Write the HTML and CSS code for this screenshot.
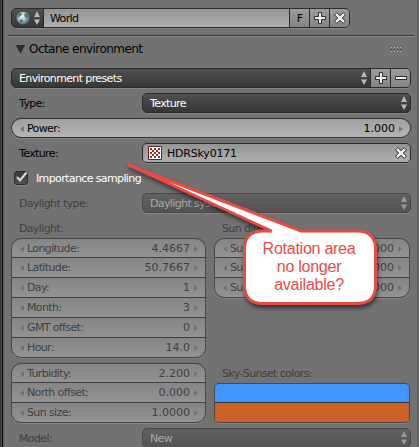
FILE: index.html
```html
<!DOCTYPE html>
<html lang="en">
<head>
<meta charset="utf-8">
<title>Octane environment</title>
<link rel="stylesheet" href="styles.css">
</head>
<body>
<svg width="0" height="0" class="defs">
  <symbol id="ud" viewBox="0 0 6 14"><path d="M3 0 6 6H0zM3 14 0 8.500H6z" fill="currentColor"/></symbol>
  <symbol id="plus" viewBox="0 0 12 12"><path d="M4.500.5h3v4h4v3h-4v4h-3v-4h-4v-3h4z" fill="#eee" stroke="#2c2c2c"/></symbol>
  <symbol id="minus" viewBox="0 0 12 12"><path d="M.5 4.500h11v3H.5z" fill="#eee" stroke="#2c2c2c"/></symbol>
  <symbol id="cross" viewBox="0 0 12 12"><path d="M2.800.6 6 3.700 9.200.6l2.200 2.200L8.300 6l3.100 3.200-2.200 2.200L6 8.300l-3.200 3.100L.6 9.200 3.700 6 .6 2.800z" fill="#eee" stroke="#2c2c2c"/></symbol>
</svg>
<main class="panel">
  <div class="row world">
    <div class="group">
      <div class="cell dark pick">
        <svg class="globe" viewBox="0 0 14 14"><defs><radialGradient id="g" cx=".42" cy=".35" r=".7"><stop offset="0" stop-color="#f0f7fc"/><stop offset=".55" stop-color="#8fb4d8"/><stop offset="1" stop-color="#3c628f"/></radialGradient></defs><circle cx="7" cy="7" r="6.500" fill="url(#g)" stroke="#3d5878" stroke-width=".7"/><path d="M1.500 4.500 4 2l2 .6L5.300 4.500 3.500 5.500 1.900 7zM8.500 3l2-.8 1.700 2.300-.5 3-1.700-.6L8.500 5zM4 8.500l3 .5-.3 2L5.200 12.500 4 10.800zM9.500 9l1.800-.5-1 2.200z" fill="#5d7a35"/></svg>
        <svg class="ud"><use href="#ud"/></svg>
      </div>
      <div class="cell light grow name">World</div>
      <div class="cell btn f">F</div>
      <div class="cell btn"><svg class="ic"><use href="#plus"/></svg></div>
      <div class="cell btn"><svg class="ic"><use href="#cross"/></svg></div>
    </div>
  </div>
  <header class="head"><svg class="tri" viewBox="0 0 9 9"><path d="M0 0h9L4.500 9z" fill="#2b2b2b"/></svg><h1>Octane environment</h1><span class="grip"></span></header>
  <div class="body">
    <div class="row">
      <div class="group grow">
        <div class="cell dark grow menu"><span>Environment presets</span><svg class="ud"><use href="#ud"/></svg></div>
        <div class="cell btn"><svg class="ic"><use href="#plus"/></svg></div>
        <div class="cell btn"><svg class="ic"><use href="#minus"/></svg></div>
      </div>
    </div>
    <div class="row"><span class="label">Type:</span><div class="group grow"><div class="cell dark grow menu"><span>Texture</span><svg class="ud"><use href="#ud"/></svg></div></div></div>
    <div class="stack power"><div class="num"><span>Power:</span><b>1.000</b></div></div>
    <div class="row"><span class="label">Texture:</span><div class="group grow tex"><div class="cell light grow">
      <svg class="checker" viewBox="0 0 14 14"><path d="M.5.5h13v13H.5z" fill="#fff" stroke="#5c241c"/><path d="M2 2h2v2H2zM6 2h2v2H6zM10 2h2v2h-2zM4 4h2v2H4zM8 4h2v2H8zM2 6h2v2H2zM6 6h2v2H6zM10 6h2v2h-2zM4 8h2v2H4zM8 8h2v2H8zM2 10h2v2H2zM6 10h2v2H6zM10 10h2v2h-2z" fill="#8e3527"/></svg>
      <span class="grow file">HDRSky0171</span><svg class="ic"><use href="#cross"/></svg></div></div></div>
    <div class="row check"><span class="box"><svg viewBox="0 0 14 14"><path d="M3 6 6 9.500 12.500 1.500" fill="none" stroke="#ddd" stroke-width="2"/></svg></span><span>Importance sampling</span></div>
    <div class="row off"><span class="label">Daylight type:</span><div class="group grow"><div class="cell dark grow menu"><span>Daylight system</span><svg class="ud"><use href="#ud"/></svg></div></div></div>
    <div class="cols off">
      <section>
        <div class="cap">Daylight:</div>
        <div class="stack">
          <div class="num"><span>Longitude:</span><b>4.4667</b></div>
          <div class="num"><span>Latitude:</span><b>50.7667</b></div>
          <div class="num"><span>Day:</span><b>1</b></div>
          <div class="num"><span>Month:</span><b>3</b></div>
          <div class="num"><span>GMT offset:</span><b>0</b></div>
          <div class="num"><span>Hour:</span><b>14.0</b></div>
        </div>
      </section>
      <section>
        <div class="cap">Sun direction:</div>
        <div class="stack">
          <div class="num"><span>Sun X:</span><b>0.000</b></div>
          <div class="num"><span>Sun Y:</span><b>1.000</b></div>
          <div class="num"><span>Sun Z:</span><b>0.000</b></div>
        </div>
      </section>
    </div>
    <div class="cols off second">
      <section>
        <div class="stack">
          <div class="num"><span>Turbidity:</span><b>2.200</b></div>
          <div class="num"><span>North offset:</span><b>0.000</b></div>
          <div class="num"><span>Sun size:</span><b>1.0000</b></div>
        </div>
      </section>
      <section>
        <div class="cap">Sky-Sunset colors:</div>
        <div class="swatches"><div class="sky"></div><div class="sunset"></div></div>
      </section>
    </div>
    <div class="row off"><span class="label">Model:</span><div class="group grow"><div class="cell dark grow menu"><span>New</span><svg class="ud"><use href="#ud"/></svg></div></div></div>
  </div>
  <aside class="callout">
    <svg viewBox="0 0 264 152"><path d="M8.500 4.500 182 71H238Q256.500 71 256.500 89V125.500Q256.500 143.500 238 143.500H144Q125.500 143.500 125.500 125.500V89Q125.500 71 144 71H152.500Z" fill="#fff" stroke="#e84b44" stroke-width="3"/></svg>
    <p>Rotation area<br>no longer<br>available?</p>
  </aside>
</main>
</body>
</html>
```
FILE: styles.css
```css
* { box-sizing: border-box; }
html, body { margin: 0; height: 447px; overflow: hidden; }
body { font: 11px/18px "DejaVu Sans", sans-serif; letter-spacing: -.62px; color: #000; }
.defs { display: block; height: 0; }
svg { flex: none; }
.panel {
  position: relative;
  width: 419px; height: 447px; overflow: hidden;
  padding: 8px 7px 0 7px;
  background: #727272;
  border-left: 1px solid #333;
  box-shadow: inset 1px 0 #555, inset 2px 0 #000, inset 3px 0 #606060, inset -1px 0 #727272, inset -2px 0 #606060;
}
.row { display: flex; height: 20px; align-items: center; }
.world { width: 342px; padding-left: 3px; }
.grow { flex: 1; min-width: 0; }
.group {
  display: flex; height: 20px; overflow: hidden;
  border: 1px solid #2b2b2b; border-radius: 5px;
  background: #2b2b2b;
}
.world .group { width: 100%; }
.row > .group, .stack, .swatches { box-shadow: 0 1px #858585; }
.cell { display: flex; align-items: center; height: 18px; }
.cell + .cell { margin-left: 1px; }
.dark { background: linear-gradient(#505050, #363636); color: #fff; }
.light { background: linear-gradient(#949494, #b0b0b0); }
.btn { width: 19px; justify-content: center; background: linear-gradient(#9c9c9c, #848484); }
.f { padding-top: 1px; }
.ic { width: 12px; height: 12px; }
.ud { width: 6px; height: 14px; color: #b8b8b8; }
.pick { width: 31px; padding-left: 4px; gap: 4px; }
.globe { width: 14px; height: 14px; }
.name { padding: 1px 0 0 6px; }
.head {
  display: flex; align-items: center;
  height: 25px; margin: 7px -2px 0 0; padding: 2px 12px 0 8px;
  border-top: 1px solid #3b3b3b; box-shadow: inset 0 1px #858585;
}
.tri { width: 9px; height: 9px; margin-right: 4px; }
h1 { flex: 1; margin: 0; font-size: 12px; font-weight: 400; letter-spacing: -.55px; }
.grip {
  width: 11px; height: 5px; margin-top: 1px;
  background: repeating-linear-gradient(90deg, #c0c0c0 0 1px, transparent 1px 3px) 0 0 / 11px 1px repeat-x,
    repeating-linear-gradient(90deg, #333 0 1px, transparent 1px 3px) 0 2px / 11px 1px repeat-x,
    repeating-linear-gradient(90deg, #c0c0c0 0 1px, transparent 1px 3px) 0 4px / 11px 1px repeat-x;
}
.body { display: flex; flex-direction: column; gap: 5px; padding: 8px 1px 0 3px; }
.label { width: 131px; padding: 2px 0 0 8px; }
.menu { justify-content: space-between; padding: 0 3px 0 7px; }
.menu span { padding-top: 1px; }
.stack { overflow: hidden; border: 1px solid #333; border-radius: 10px; background: #333; display: grid; gap: 1px; }
.num {
  display: flex; align-items: center; justify-content: space-between;
  height: 19px; padding: 1px 7px 0 8px;
  background: linear-gradient(#a0a0a0, #b4b4b4);
}
.power .num { height: 18px; }
.num:first-child { height: 18px; }
.num::before, .num::after { content: ""; border: 3.500px solid transparent; border-left-width: 0; border-right: 4px solid #777; }
.num::after { transform: scaleX(-1); }
.num span { flex: 1; padding-left: 3px; }
.num b { font-weight: 400; letter-spacing: 0; padding-right: 4px; }
.tex .cell { padding: 0 3px 0 5px; }
.checker { width: 14px; height: 14px; }
.file { padding: 1px 0 0 5px; letter-spacing: -.2px; }
.check { padding-left: 3px; gap: 8px; color: #fff; }
.check > span:last-child { padding-top: 2px; }
.box { width: 14px; height: 14px; border: 1px solid #2b2b2b; border-radius: 3px; background: linear-gradient(#3a3a3a, #505050); box-shadow: 0 1px #858585; display: flex; }
.box svg { width: 14px; height: 14px; margin: -1px; }
.cols { display: grid; grid-template-columns: 195px 196px; column-gap: 8px; }
.cap { height: 20px; padding: 2px 0 0 8px; }
.off { color: #404040; }
.off .group, .off .stack, .off .swatches { border-color: #494949; }
.off .dark { background: linear-gradient(#616161, #545454); color: #a8a8a8; }
.off .ud { color: #989898; }
.off .stack { background: #404040; }
.off .num { background: linear-gradient(#858585, #939393); }
.off .num::before, .off .num::after { border-right-color: #727272; }
.swatches { height: 40px; border: 1px solid #444; border-radius: 5px; overflow: hidden; background: #333; display: grid; grid-template-rows: 18px 19px; gap: 1px; }
.sky { background: #4096ff; }
.sunset { background: #cb6127; }
.callout { position: absolute; left: 118px; top: 160px; width: 264px; height: 152px; }
.callout svg { display: block; width: 264px; height: 152px; filter: drop-shadow(1px 3px 2px rgba(0, 0, 0, .55)); }
.callout p {
  position: absolute; left: 125px; top: 80px; width: 130px; margin: 0;
  text-align: center; font: 16px/18px "Liberation Sans", sans-serif; letter-spacing: -.25px; color: #e84b44;
}
```
